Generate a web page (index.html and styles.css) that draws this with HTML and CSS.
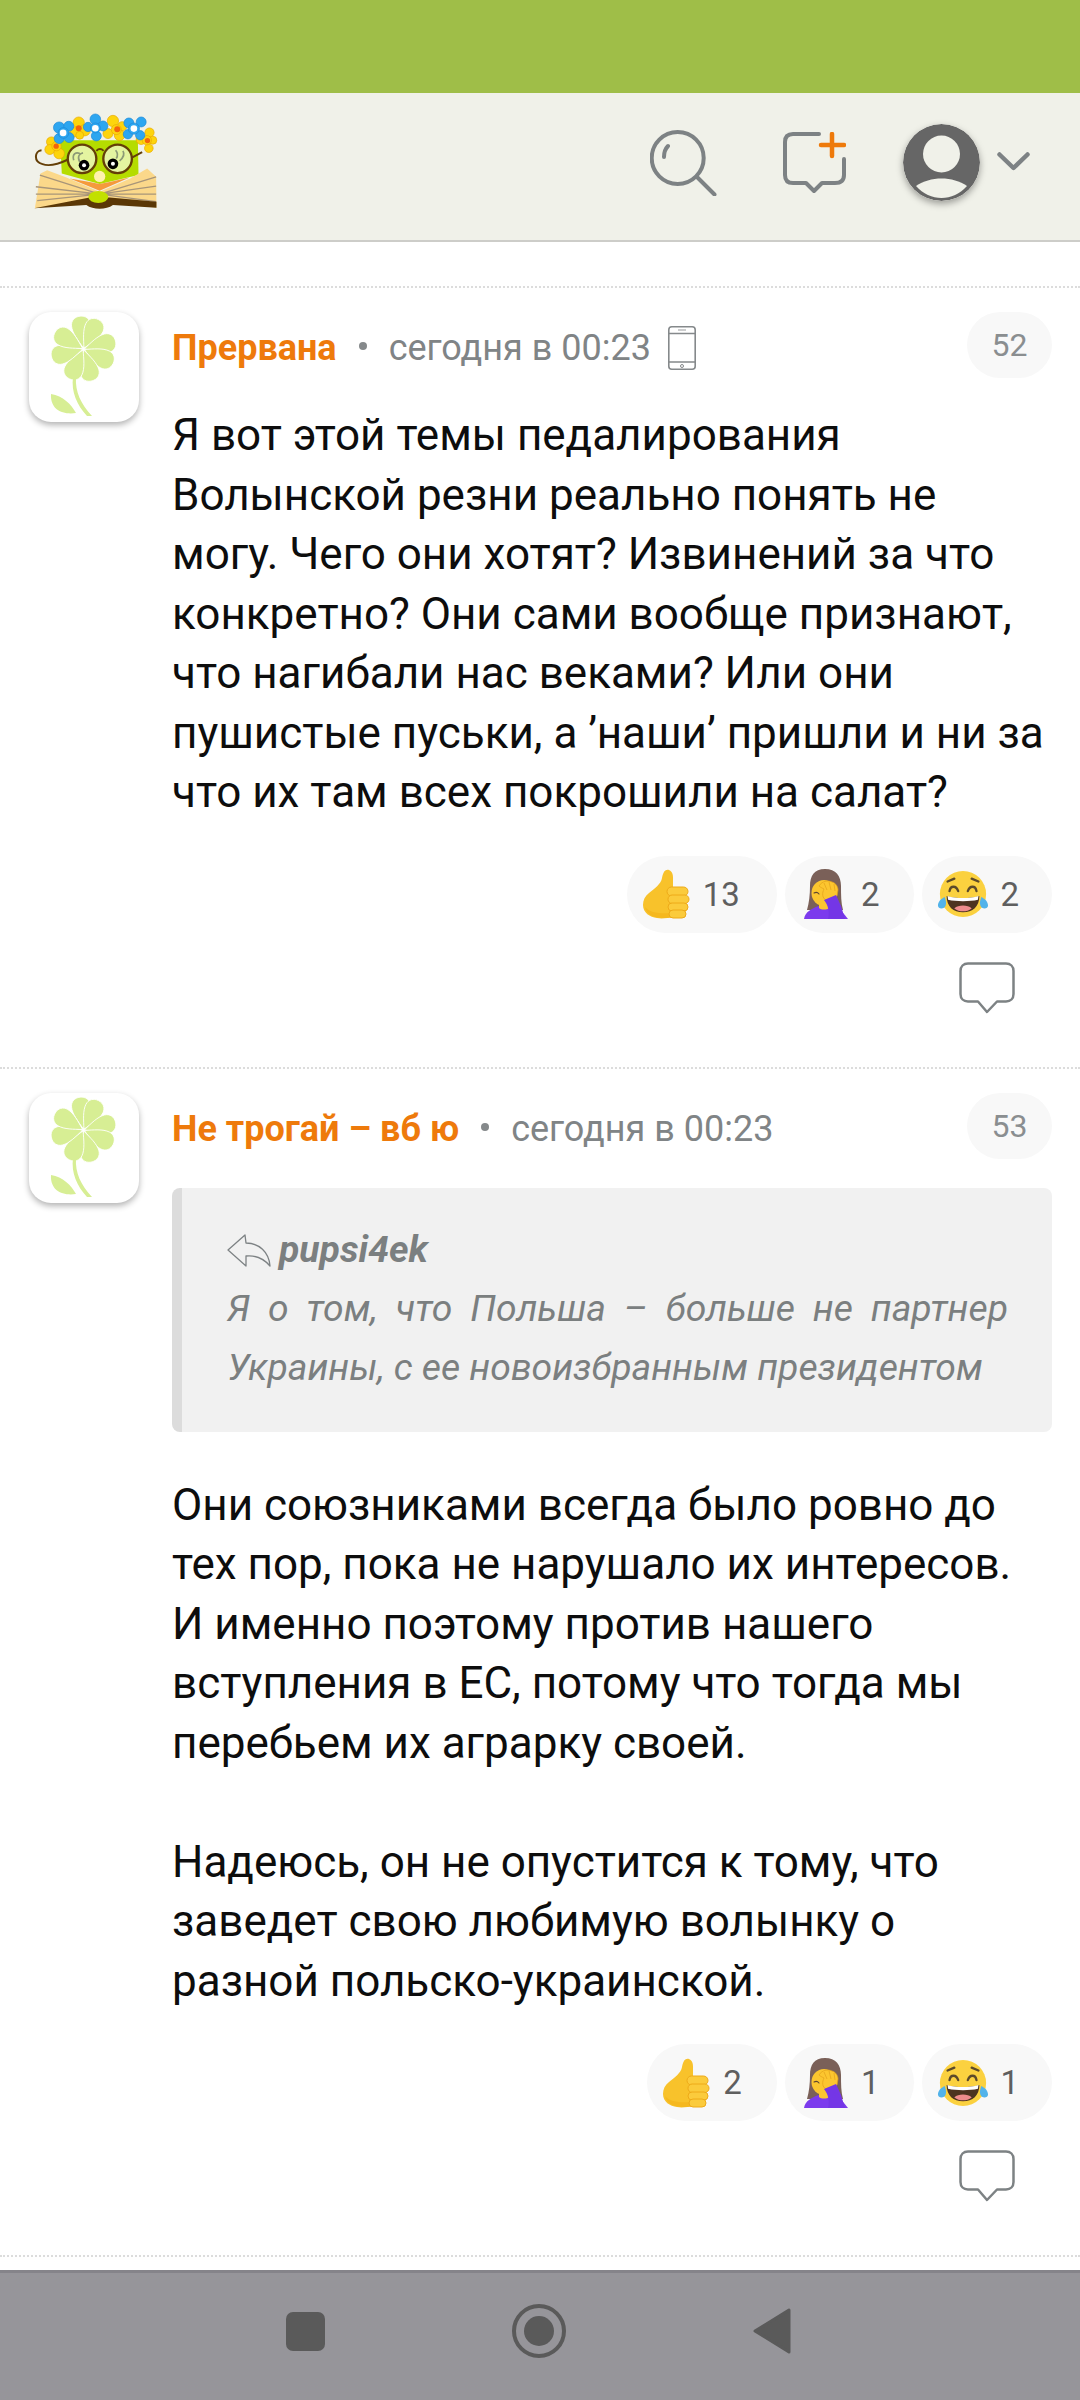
FILE: index.html
```html
<!DOCTYPE html>
<html lang="ru">
<head>
<meta charset="utf-8">
<title>Комментарии</title>
<link rel="stylesheet" href="styles.css">
</head>
<body>
<svg class="defs" width="0" height="0" aria-hidden="true">
  <defs>
    <symbol id="flower" viewBox="0 0 110 110">
      <g fill="#d7ee94" stroke="#fff" stroke-width=".8">
        <path d="M54.500 36C50 28 45 20 45 13C45 7.500 49 4 54.500 4C60 4 64 7.500 64 13C64 20 59 28 54.500 36Z" transform="rotate(-6 54.500 37)"/>
        <path d="M54.500 36C50 28 45 20 45 13C45 7.500 49 4 54.500 4C60 4 64 7.500 64 13C64 20 59 28 54.500 36Z" transform="rotate(27 54.500 37)"/>
        <path d="M54.500 36C50 28 45 20 45 13C45 7.500 49 4 54.500 4C60 4 64 7.500 64 13C64 20 59 28 54.500 36Z" transform="rotate(76 54.500 37)"/>
        <path d="M54.500 36C50 28 45 20 45 13C45 7.500 49 4 54.500 4C60 4 64 7.500 64 13C64 20 59 28 54.500 36Z" transform="rotate(116 54.500 37)"/>
        <path d="M54.500 36C50 28 45 20 45 13C45 7.500 49 4 54.500 4C60 4 64 7.500 64 13C64 20 59 28 54.500 36Z" transform="rotate(165 54.500 37)"/>
        <path d="M54.500 36C50 28 45 20 45 13C45 7.500 49 4 54.500 4C60 4 64 7.500 64 13C64 20 59 28 54.500 36Z" transform="rotate(205 54.500 37)"/>
        <path d="M54.500 36C50 28 45 20 45 13C45 7.500 49 4 54.500 4C60 4 64 7.500 64 13C64 20 59 28 54.500 36Z" transform="rotate(256 54.500 37)"/>
        <path d="M54.500 36C50 28 45 20 45 13C45 7.500 49 4 54.500 4C60 4 64 7.500 64 13C64 20 59 28 54.500 36Z" transform="rotate(301 54.500 37)"/>
      </g>
      <g fill="#d7ee94">
        <path d="M44 65C42 80 48 93 58 104H63C52 92 46 80 47 65Z"/>
        <path d="M22 82C34 84 42 92 47 101C34 103 21 98 22 82Z"/>
      </g>
    </symbol>
    <symbol id="thumb" viewBox="0 0 48 50">
      <path fill="#f8c22b" d="M27 1C22 0 21 5 20 9C19 15 13 19 7 24C3 27 1 31 1 36C1 44 8 48 15 49C20 50 26 49 31 48L31 15C31 9 32 3 27 1Z"/>
      <path fill="#f5b81f" d="M3 38C8 44 18 45 31 44V48C22 50 5 50 3 38Z"/>
      <rect x="25" y="18" width="21" height="9" rx="4.500" fill="#fbcb3c" stroke="#eeaa18"/>
      <rect x="26" y="26" width="21" height="8.500" rx="4.200" fill="#fbcb3c" stroke="#eeaa18"/>
      <rect x="26" y="34" width="20" height="8" rx="4" fill="#fbcb3c" stroke="#eeaa18"/>
      <rect x="27" y="41" width="17" height="8" rx="4" fill="#fbcb3c" stroke="#eeaa18"/>
    </symbol>
    <symbol id="facepalm" viewBox="0 0 44 50">
      <path fill="#7a6058" d="M21 0C10 0 6 7 6 17C6 26 5 34 3 41H39C37 34 37 26 37 17C37 7 32 0 21 0Z"/>
      <path fill="#7c3bed" d="M0 50C1 43 8 39 15 37H27L36 40L44 50Z"/>
      <ellipse cx="20" cy="24" rx="12.500" ry="13" fill="#fbc62f"/>
      <path fill="#fbc62f" d="M15 34H25V39C23 41 17 41 15 39Z"/>
      <path fill="none" stroke="#5e4530" stroke-width="1.100" stroke-linecap="round" d="M10 24C12 23 13.500 23 15 25M27 25C28.500 23 30 23 32 24"/>
      <path fill="#fcc62f" stroke="#e3a11a" stroke-width=".7" d="M15 17C18 12 24 11 28 13C32 14 34 18 34 21L33 27L22 31C18 29 18 24 20 20C18 19 16 18 15 17Z"/>
      <path fill="none" stroke="#e3a11a" stroke-width=".7" d="M20 14L23 21M25 13L27 21M30 15L31 22"/>
      <path fill="#7436e6" d="M20 31L32 26L37 37L41 50H24C26 43 24 36 20 31Z"/>
    </symbol>
    <symbol id="joy" viewBox="0 0 54 50">
      <circle cx="27" cy="25" r="24" fill="#fbd13f"/>
      <path fill="none" stroke="#5c4a2a" stroke-width="2.400" stroke-linecap="round" d="M13 22C14 16 20 16 22 22M32 22C34 16 40 16 41 22M11 12L18 9M43 12L36 9"/>
      <path fill="#4d3320" d="M10 27C20 30 34 30 44 27C44 38 37 44 27 44C17 44 10 38 10 27Z"/>
      <path fill="#fff" d="M11 27C20 30 34 30 43 27L42.500 31C34 33 20 33 11.500 31Z"/>
      <path fill="#ee8c8c" d="M18 40C22 36 32 36 36 40C31 44 23 44 18 40Z"/>
      <path fill="#52b3ea" d="M1 37C1 33 4 30 8 28C9 31 10 34 9 37C8 41 1 41 1 37Z"/>
      <path fill="#52b3ea" d="M53 37C53 33 50 30 46 28C45 31 44 34 45 37C46 41 53 41 53 37Z"/>
    </symbol>
    <symbol id="bubble" viewBox="0 0 56 52">
      <path fill="none" stroke="#7d8284" stroke-width="2.500" stroke-linejoin="round" d="M9 1.500H47C51.500 1.500 54.500 4.500 54.500 9V32C54.500 36.500 51.500 39.500 47 39.500H38L28 50L19 39.500H9C4.500 39.500 1.500 36.500 1.500 32V9C1.500 4.500 4.500 1.500 9 1.500Z"/>
    </symbol>
  </defs>
</svg>

<div class="status-bar"></div>

<header class="top">
  <svg class="logo" viewBox="100 155 375 295" role="img" aria-label="Логотип">
    <path d="M181 240H415L417 345L300 372L186 340Z" fill="#b5dc00"/>
    <path d="M105 445L122 340L142 330L200 352L300 395L392 355L443 325L470 350L471 443L300 420Z" fill="#fbd88a"/>
    <path d="M210 355L300 392L390 352L330 366L300 372L270 366Z" fill="#f59a3c"/>
    <path d="M300 402L108 380M300 402L108 402M300 402L120 345M300 402L112 422M300 402L470 350M300 402L470 378M300 402L470 402M300 402L470 425" stroke="#a89579" stroke-width="4" fill="none"/>
    <path d="M103 445L270 412L330 412L471 425V443L340 435C320 450 280 450 260 435Z" fill="#5a3706"/>
    <ellipse cx="296" cy="411" rx="30" ry="18" fill="#c2e000"/>
    <circle cx="300" cy="349" r="17" fill="#fff2ae"/>
    <circle cx="247" cy="296" r="43" fill="#e4f4a0" stroke="#643f08" stroke-width="7"/>
    <circle cx="354" cy="296" r="43" fill="#e4f4a0" stroke="#643f08" stroke-width="7"/>
    <path d="M290 272C298 264 304 264 312 272M397 292L428 276M205 298C180 310 150 320 128 312C100 305 104 272 125 270" fill="none" stroke="#643f08" stroke-width="6"/>
    <path d="M222 300C216 280 230 275 240 280M240 305C232 290 238 280 250 278M350 295C356 285 355 278 348 270M360 302C374 290 375 280 370 272" fill="none" stroke="#8d9a76" stroke-width="5"/>
    <circle cx="253" cy="315" r="16" fill="#000"/><circle cx="253" cy="315" r="6" fill="#fff"/>
    <circle cx="340" cy="311" r="16" fill="#000"/><circle cx="340" cy="311" r="6" fill="#fff"/>
    <g fill="#fdd40d" stroke="#e9a800" stroke-width="2">
      <circle cx="155" cy="245" r="15"/><circle cx="150" cy="268" r="15"/><circle cx="178" cy="280" r="16"/><circle cx="170" cy="258" r="14"/>
      <circle cx="237" cy="187" r="17"/><circle cx="225" cy="215" r="15"/><circle cx="255" cy="210" r="17"/><circle cx="240" cy="225" r="12"/>
      <circle cx="340" cy="182" r="17"/><circle cx="325" cy="220" r="15"/><circle cx="368" cy="198" r="14"/><circle cx="360" cy="225" r="16"/><circle cx="350" cy="208" r="15"/>
      <circle cx="450" cy="217" r="14"/><circle cx="425" cy="238" r="15"/><circle cx="460" cy="240" r="12"/><circle cx="448" cy="264" r="13"/><circle cx="442" cy="240" r="14"/>
    </g>
    <g fill="#f4640c">
      <circle cx="169" cy="258" r="8"/><circle cx="237" cy="204" r="9"/><circle cx="353" cy="207" r="9"/><circle cx="444" cy="241" r="8"/>
    </g>
    <g fill="#2da6f0" stroke="#1c88d6" stroke-width="2">
      <circle cx="178" cy="202" r="17"/><circle cx="207" cy="198" r="15"/><circle cx="178" cy="235" r="15"/><circle cx="208" cy="232" r="15"/><circle cx="191" cy="218" r="16"/>
      <circle cx="287" cy="177" r="16"/><circle cx="265" cy="200" r="14"/><circle cx="310" cy="197" r="15"/><circle cx="290" cy="227" r="15"/><circle cx="287" cy="203" r="15"/>
      <circle cx="388" cy="188" r="15"/><circle cx="425" cy="185" r="15"/><circle cx="385" cy="222" r="14"/><circle cx="422" cy="225" r="14"/><circle cx="403" cy="205" r="17"/>
    </g>
    <g fill="#fff"><circle cx="190" cy="218" r="10"/><circle cx="287" cy="204" r="10"/><circle cx="403" cy="205" r="10"/></g>
  </svg>
  <div class="top-actions">
    <svg class="ico-search" viewBox="0 0 67 67" aria-label="Поиск">
      <circle cx="27.700" cy="29" r="26" fill="none" stroke="#7d8284" stroke-width="4"/>
      <path d="M47 48L64.500 65.500M18 17C15 20 14 23 14 28" fill="none" stroke="#7d8284" stroke-width="4" stroke-linecap="round"/>
    </svg>
    <svg class="ico-new" viewBox="0 0 63 62" aria-label="Новый комментарий">
      <path d="M36 2H10C4.500 2 2 4.500 2 10V43C2 49 5 51 10 51H23L31 59L39 51H52C57 51 61 49 61 43V27" fill="none" stroke="#7d8284" stroke-width="4" stroke-linecap="round" stroke-linejoin="round"/>
      <path d="M49 2V24M38 13H61" fill="none" stroke="#ee7a0b" stroke-width="4.500" stroke-linecap="round"/>
    </svg>
    <svg class="ico-user" viewBox="0 0 77 77" aria-label="Профиль">
      <circle cx="38.500" cy="38.500" r="38.500" fill="#666"/>
      <circle cx="38.500" cy="30" r="18.500" fill="#f0f1e9"/>
      <path d="M13 62C27 52 50 52 64 62C50 78 27 78 13 62Z" fill="#f0f1e9"/>
    </svg>
    <svg class="ico-chev" viewBox="0 0 33 19" aria-hidden="true">
      <path d="M2.500 2.500L16.500 16L30.500 2.500" fill="none" stroke="#7d8284" stroke-width="4.500" stroke-linecap="round" stroke-linejoin="round"/>
    </svg>
  </div>
</header>

<main class="feed">
  <article class="comment">
    <svg class="avatar" aria-hidden="true"><use href="#flower"/></svg>
    <div class="body">
      <div class="meta">
        <span class="name">Прервана</span>
        <span class="dot"></span>
        <span class="time">сегодня в 00:23</span>
        <svg class="phone" viewBox="0 0 28 44" aria-label="С телефона">
          <rect x=".8" y=".8" width="26.400" height="42.400" rx="3" fill="none" stroke="#85898b" stroke-width="1.600"/>
          <path d="M1 7.500H27M1 36H27" stroke="#85898b" stroke-width="1.400"/>
          <path d="M10 4H18" stroke="#a9acae" stroke-width="1.200"/>
          <circle cx="14" cy="40" r="1.500" fill="none" stroke="#85898b" stroke-width="1"/>
        </svg>
        <span class="num">52</span>
      </div>
      <p class="text text-first">Я вот этой темы педалирования Волынской резни реально понять не могу. Чего они хотят? Извинений за что конкретно? Они сами вообще признают, что нагибали нас веками? Или они пушистые пуськи, а ’наши’ пришли и ни за что их там всех покрошили на салат?</p>
      <div class="reactions">
        <span class="pill pill-wide"><svg class="emo-thumb"><use href="#thumb"/></svg><span class="count">13</span></span>
        <span class="pill"><svg class="emo-face"><use href="#facepalm"/></svg><span class="count">2</span></span>
        <span class="pill pill-joy"><svg class="emo-joy"><use href="#joy"/></svg><span class="count">2</span></span>
      </div>
      <div class="reply-row"><svg class="bubble"><use href="#bubble"/></svg></div>
    </div>
  </article>

  <article class="comment">
    <svg class="avatar" aria-hidden="true"><use href="#flower"/></svg>
    <div class="body">
      <div class="meta">
        <span class="name">Не трогай – вб ю</span>
        <span class="dot"></span>
        <span class="time">сегодня в 00:23</span>
        <span class="num">53</span>
      </div>
      <blockquote class="quote">
        <div class="quote-author">
          <svg class="quote-arrow" viewBox="0 0 44 33" aria-hidden="true">
            <path d="M1 16L18 1L19 9C32 9 42 18 43 32C37 25 29 21 19 22L19 32Z" fill="none" stroke="#7d8284" stroke-width="1.300" stroke-linejoin="round"/>
          </svg>
          <span>pupsi4ek</span>
        </div>
        <p class="quote-text">Я о том, что Польша – больше не партнер Украины, с ее новоизбранным президентом</p>
      </blockquote>
      <p class="text">Они союзниками всегда было ровно до тех пор, пока не нарушало их интересов. И именно поэтому против нашего вступления в ЕС, потому что тогда мы перебьем их аграрку своей.<br><br>Надеюсь, он не опустится к тому, что заведет свою любимую волынку о разной польско-украинской.</p>
      <div class="reactions">
        <span class="pill"><svg class="emo-thumb"><use href="#thumb"/></svg><span class="count">2</span></span>
        <span class="pill"><svg class="emo-face"><use href="#facepalm"/></svg><span class="count">1</span></span>
        <span class="pill pill-joy"><svg class="emo-joy"><use href="#joy"/></svg><span class="count">1</span></span>
      </div>
      <div class="reply-row"><svg class="bubble"><use href="#bubble"/></svg></div>
    </div>
  </article>
</main>

<nav class="sysnav">
  <svg class="nav-square" viewBox="0 0 39 39" aria-label="Недавние"><rect width="39" height="39" rx="7" fill="#5a5a5a"/></svg>
  <svg class="nav-home" viewBox="0 0 54 54" aria-label="Домой">
    <circle cx="27" cy="27" r="25" fill="none" stroke="#5a5a5a" stroke-width="4"/>
    <circle cx="27" cy="27" r="15" fill="#5a5a5a"/>
  </svg>
  <svg class="nav-back" viewBox="0 0 38 46" aria-label="Назад"><path d="M2 23L36 2V44Z" fill="#5a5a5a" stroke="#5a5a5a" stroke-width="3" stroke-linejoin="round"/></svg>
</nav>
</body>
</html>
```

FILE: styles.css
```css
* { box-sizing: border-box; }
html, body { margin: 0; padding: 0; }
body {
  width: 1080px;
  height: 2400px;
  overflow: hidden;
  background: #fff;
  font-family: Roboto, "Liberation Sans", sans-serif;
  display: flex;
  flex-direction: column;
}
.defs { position: absolute; }

.status-bar { height: 93px; background: #9fbe48; flex: none; }

.top {
  flex: none;
  height: 149px;
  background: #f0f1e9;
  border-bottom: 2px solid #cdcdc9;
  display: flex;
  align-items: flex-start;
  justify-content: space-between;
  padding: 19px 50px 0 33px;
}
.logo { width: 125px; height: 98px; }
.top-actions { display: flex; align-items: center; height: 77px; margin-top: 12px; }
.ico-search { width: 67px; height: 67px; }
.ico-new { width: 63px; height: 62px; margin-left: 66px; }
.ico-user {
  width: 77px; height: 77px; margin-left: 57px;
  border-radius: 50%;
  box-shadow: 0 3px 7px rgba(0, 0, 0, .35);
}
.ico-chev { width: 33px; height: 19px; margin-left: 17px; margin-top: -2px; }

.feed { flex: none; margin-top: 44px; border-top: 2px dotted #dcdcdc; }
.comment {
  display: flex;
  align-items: flex-start;
  padding: 24px 28px 0 29px;
  border-bottom: 2px dotted #dcdcdc;
}
.avatar {
  flex: none;
  width: 110px;
  height: 110px;
  background: #fff;
  border-radius: 22px;
  box-shadow: 0 3px 6px rgba(0, 0, 0, .3);
}
.body { flex: 1; margin-left: 33px; min-width: 0; }

.meta { display: flex; align-items: center; height: 66px; padding-top: 6px; }
.name { font-weight: 700; font-size: 36px; color: #ee7a0b; }
.dot { width: 8px; height: 8px; border-radius: 50%; background: #85898b; margin: 0 22px 4px 22px; }
.time { font-size: 36px; color: #808486; }
.phone { width: 28px; height: 44px; margin-left: 17px; }
.num {
  margin-left: auto;
  margin-top: -6px;
  width: 85px;
  height: 66px;
  border-radius: 33px;
  background: #f8f8f8;
  color: #8a8e90;
  font-size: 32px;
  display: flex;
  align-items: center;
  justify-content: center;
}

.text {
  margin: 0;
  font-size: 44px;
  line-height: 59.5px;
  color: #0d0d0d;
}
.text-first { margin-top: 28px; }

.quote {
  margin: 29px 0 44px;
  background: #f1f1f1;
  border-left: 10px solid #dcdcdc;
  border-radius: 8px;
  padding: 32px 44px 35px 45px;
  color: #7b7f80;
  font-style: italic;
  font-size: 37.300px;
  line-height: 59px;
}
.quote-author { display: flex; align-items: center; font-weight: 700; height: 59px; }
.quote-arrow { width: 44px; height: 33px; margin-right: 8px; margin-top: 2px; }
.quote-text { margin: 0; text-align: justify; }

.reactions { display: flex; justify-content: flex-end; gap: 8px; margin-top: 33px; }
.pill {
  display: flex;
  align-items: center;
  height: 77px;
  padding: 0 35px 0 15px;
  border-radius: 39px;
  background: #f8f8f8;
}
.pill-wide { padding-right: 37px; }
.pill-joy { padding-left: 15px; padding-right: 33px; }
.emo-thumb { width: 48px; height: 50px; margin-right: 13px; }
.emo-face { width: 44px; height: 50px; margin: 0 13px 0 4px; }
.emo-joy { width: 52px; height: 50px; margin-right: 11px; }
.count { font-size: 33px; color: #5f5f5f; }

.reply-row { display: flex; justify-content: flex-end; padding: 29px 37px 53px 0; }
.bubble { width: 56px; height: 52px; display: block; }

.sysnav {
  margin-top: auto;
  height: 130px;
  flex: none;
  background: #96959a;
  border-top: 3px solid #85848a;
  display: grid;
  grid-template-columns: 286px 39px 187px 54px 187px 38px;
  align-items: center;
  padding-bottom: 11px;
}
.nav-square { grid-column: 2; width: 39px; height: 39px; }
.nav-home { grid-column: 4; width: 54px; height: 54px; }
.nav-back { grid-column: 6; width: 38px; height: 46px; }
```
